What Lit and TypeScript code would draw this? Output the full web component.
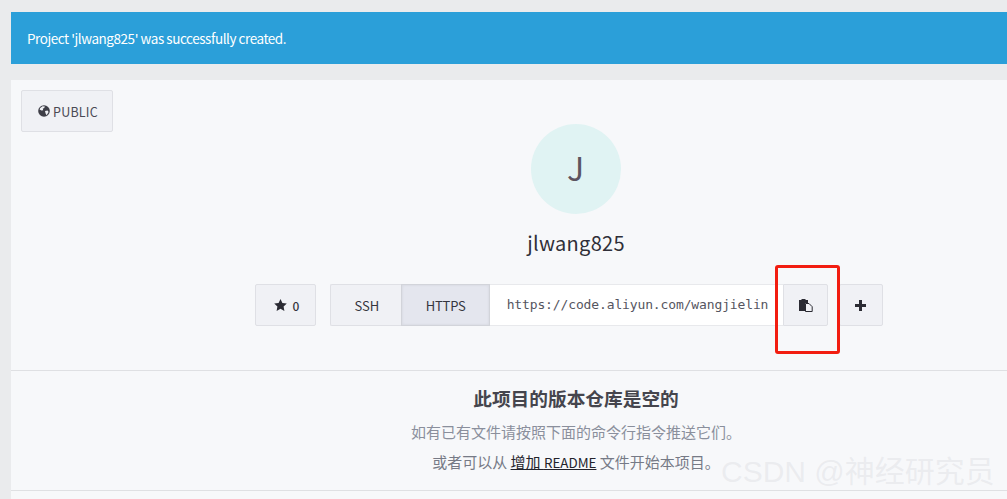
import { LitElement, html, css } from "lit";
import { customElement } from "lit/decorators.js";

@customElement("app-root")
export class AppRoot extends LitElement {
  static styles = css`
    :host {
      display: block;
      position: relative;
      width: 1007px;
      height: 499px;
      overflow: hidden;
      background: #eaebed;
      font-family: "Noto Sans CJK SC", "Noto Sans", sans-serif;
      color: #3e3e47;
    }
    .wrap { padding: 12px 0 0 11px; width: 1130px; }
    .banner {
      height: 52px;
      background: #2b9fd9;
      color: #fff;
      font-size: 13.5px;
      letter-spacing: -0.45px;
      line-height: 52px;
      padding-left: 16px;
      margin-bottom: 16px;
    }
    .panel { background: #f7f8fa; position: relative; height: 419px; }
    .btn {
      display: flex;
      align-items: center;
      justify-content: center;
      box-sizing: border-box;
      height: 42px;
      background: #f0f1f5;
      border: 1px solid #dfe0e5;
      font-size: 13px;
      color: #35353e;
    }
    .public {
      position: absolute;
      left: 10px;
      top: 10px;
      width: 92px;
      padding-left: 2px;
      gap: 3px;
      border-radius: 2px;
      font-size: 12.5px;
      letter-spacing: 0.2px;
      color: #4a4a54;
    }
    .head { padding-top: 44px; height: 291px; box-sizing: border-box; border-bottom: 1px solid #dfe0e3; display: flex; flex-direction: column; align-items: center; }
    .avatar {
      width: 90px; height: 90px; border-radius: 50%;
      background: #e0f3f3; color: #5c5560;
      font-size: 32px; line-height: 86px; text-align: center; text-indent: -1px;
    }
    .name { font-size: 20px; letter-spacing: 0.3px; line-height: 30px; margin-top: 14px; color: #2f2f38; }
    .row { display: flex; margin-top: 26px; width: 628px; margin-right: 14px; }
    .star { width: 61px; padding-left: 2px; gap: 6px; font-weight: 500; border-radius: 2px; font-size: 12px; margin-right: 14px; }
    .ssh { width: 71px; padding-left: 2px; border-radius: 2px 0 0 2px; border-right: 0; }
    .https { width: 89px; padding-left: 1px; background: #e4e6ee; border-color: #d2d4da; box-shadow: inset 0 0 3px rgba(0,0,0,.08); letter-spacing: -0.2px; }
    .url {
      width: 294px; box-sizing: border-box; height: 42px; background: #fff;
      border: 1px solid #e8e9ec; border-left: 0; border-right: 0;
      font-family: "DejaVu Sans Mono", monospace; font-size: 13px; color: #555560;
      line-height: 40px; padding-left: 17px; white-space: nowrap;
      letter-spacing: -0.13px;
    }
    .copy { width: 45px; border-radius: 0 2px 2px 0; }
    .plus { width: 44px; margin-left: 11px; padding-right: 2px; border-radius: 2px; }
    .empty { text-align: center; height: 120px; box-sizing: border-box; padding-top: 13px; border-bottom: 1px solid #dfe0e3; }
    h4 { margin: 0; font-size: 18.7px; line-height: 27px; font-weight: 700; color: #45454d; }
    p { margin: 0; font-size: 15px; color: #8a8f9c; line-height: 28px; }
    p.first { margin-top: 7px; }
    p.second { margin-top: 2px; color: #767a86; }
    a { color: #23232b; text-decoration: underline; }
    .latin { font-size: 13.4px; }
    .shot {
      position: absolute; left: 775px; top: 265px; width: 65px; height: 89px;
      box-sizing: border-box; border: 3px solid #f21d10; border-radius: 3px;
    }
    .mark {
      position: absolute; left: 721px; top: 452px; font-family: "Liberation Sans", "Noto Sans CJK SC", sans-serif; font-size: 30px; line-height: 40px;
      color: rgba(200,202,208,.26); white-space: nowrap;
    }
    svg { display: block; }
  `;

  render() {
    return html`
      <div class="wrap">
        <div class="banner">Project 'jlwang825' was successfully created.</div>
        <div class="panel">
          <div class="btn public">
            <svg width="12" height="12" viewBox="0 0 12 12"><circle cx="6" cy="6" r="5.8" fill="#3e3e47"/><path d="M2.2 3 4.6 1.2 7 1.600 6 3.200 4.800 3.600 5.200 5.200 3.400 5.600 1.600 4.600ZM7 6 9.600 5.400 10.600 7 8.600 10.200 7.600 8.600Z" fill="#f0f1f5"/></svg>
            PUBLIC
          </div>
          <div class="head">
            <div class="avatar">J</div>
            <div class="name">jlwang825</div>
            <div class="row">
              <div class="btn star">
                <svg width="13" height="12" viewBox="0 0 13 12"><path d="M6.5 0 8.4 4 12.8 4.5 9.6 7.5 10.4 12 6.5 9.8 2.6 12 3.4 7.5 .2 4.5 4.6 4Z" fill="#2b2b33"/></svg>
                0
              </div>
              <div class="btn ssh">SSH</div>
              <div class="btn https">HTTPS</div>
              <div class="url">https://code.aliyun.com/wangjielin</div>
              <div class="btn copy">
                <svg width="14" height="13" viewBox="0 0 14 13"><path d="M0 1h2.500V0h4v1H9v3H6v8H0Z" fill="#2b2b33"/><path d="M6.500 4.500h3.500l3.200 3.200v4.800H6.500Z" fill="#f0f1f5" stroke="#2b2b33"/></svg>
              </div>
              <div class="btn plus">
                <svg width="11" height="11" viewBox="0 0 11 11"><path d="M4 0h3v4h4v3H7v4H4V7H0V4h4Z" fill="#2b2b33"/></svg>
              </div>
            </div>
          </div>
          <div class="empty">
            <h4>此项目的版本仓库是空的</h4>
            <p class="first">如有已有文件请按照下面的命令行指令推送它们。</p>
            <p class="second">或者可以从 <a>增加 <span class="latin">README</span></a> 文件开始本项目。</p>
          </div>
        </div>
      </div>
      <div class="shot"></div>
      <div class="mark">CSDN @神经研究员</div>
    `;
  }
}
